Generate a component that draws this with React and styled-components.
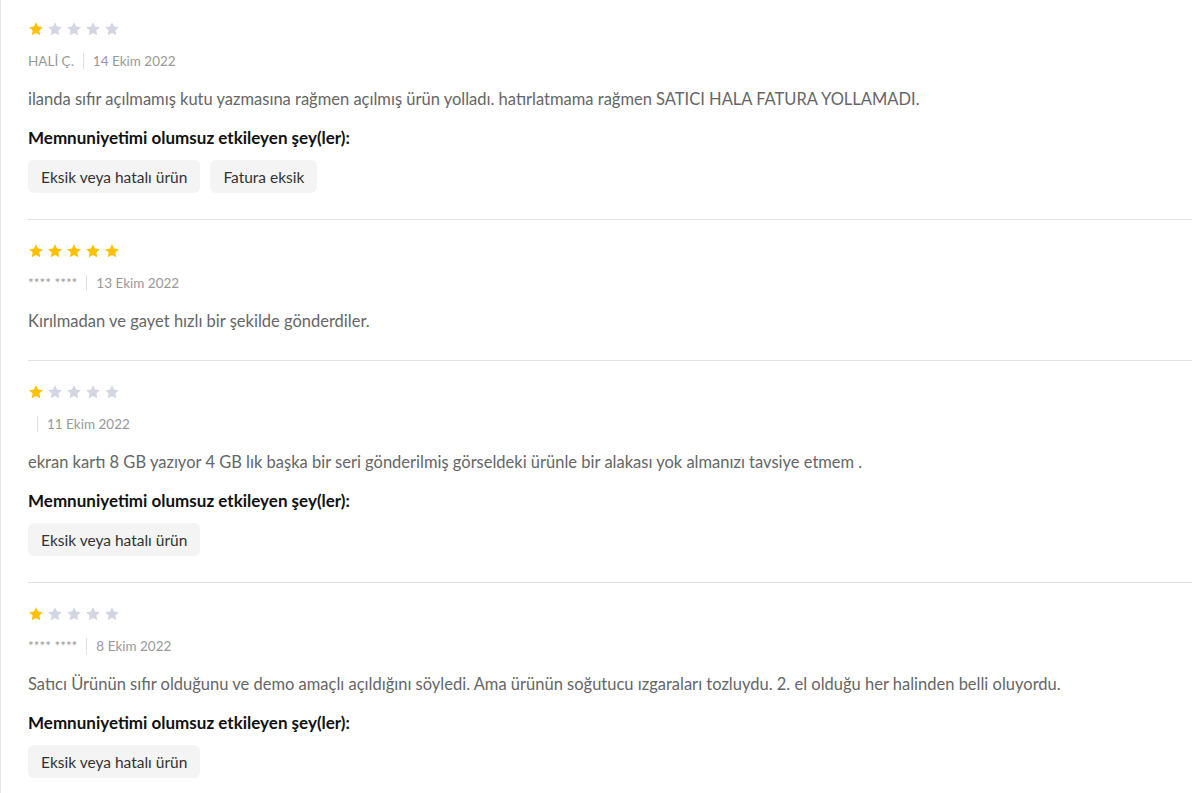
import React from "react";
import styled, { createGlobalStyle } from "styled-components";

const Global = createGlobalStyle`
  html, body { margin: 0; padding: 0; background: #fff; }
  body { font-family: "Lato", "Open Sans", sans-serif; }
`;

const Page = styled.div`
  border-left: 1px solid #e6e6e6;
  min-height: 793px;
  padding-left: 27px;
  box-sizing: border-box;
`;

const Review = styled.div`
  padding: 23px 0 26px;
  border-bottom: 1px solid #e2e2e2;
  &:first-child { padding-top: 21px; }
  &:last-child { border-bottom: none; }
`;

const Stars = styled.div`
  display: flex;
  gap: 3px;
  height: 16px;
  align-items: center;
`;

const StarSvg = styled.svg`
  width: 16px;
  height: 16px;
  display: block;
  fill: ${(p) => (p.$on ? "#ffc000" : "#d1d6e2")};
`;

const Star = ({ on }) => (
  <StarSvg $on={on} viewBox="0 0 24 24">
    <path d="M12 1.8l3.1 6.6 7.2.9-5.3 5 1.4 7.1L12 17.9l-6.4 3.5 1.4-7.1-5.3-5 7.2-.9z" />
  </StarSvg>
);

const Meta = styled.div`
  display: flex;
  align-items: center;
  margin-top: 15px;
  font-size: 13.5px;
  color: #999;
  height: 18px;
`;

const Author = styled.span`
  color: #999;
`;

const Sep = styled.span`
  width: 1px;
  height: 16px;
  background: #e1e1e1;
  margin: 0 9px;
`;

const Body = styled.p`
  margin: 19px 0 3px;
  font-size: 16.5px;
  line-height: 20px;
  color: #666;
`;

const Heading = styled.div`
  margin-top: 19px;
  font-size: 17px;
  font-weight: 700;
  line-height: 20px;
  color: #111;
`;

const Chips = styled.div`
  display: flex;
  gap: 10px;
  margin-top: 12px;
`;

const Chip = styled.span`
  display: inline-flex;
  align-items: center;
  height: 33px;
  padding: 0 13px;
  background: #f4f4f4;
  border-radius: 6px;
  font-size: 15.5px;
  color: #333;
`;

const reviews = [
  {
    rating: 1,
    author: "HALİ Ç.",
    date: "14 Ekim 2022",
    text: "ilanda sıfır açılmamış kutu yazmasına rağmen açılmış ürün yolladı. hatırlatmama rağmen SATICI HALA FATURA YOLLAMADI.",
    tags: ["Eksik veya hatalı ürün", "Fatura eksik"],
  },
  {
    rating: 5,
    author: "**** ****",
    date: "13 Ekim 2022",
    text: "Kırılmadan ve gayet hızlı bir şekilde gönderdiler.",
    tags: [],
  },
  {
    rating: 1,
    author: "",
    date: "11 Ekim 2022",
    text: "ekran kartı 8 GB yazıyor 4 GB lık başka bir seri gönderilmiş görseldeki ürünle bir alakası yok almanızı tavsiye etmem .",
    tags: ["Eksik veya hatalı ürün"],
  },
  {
    rating: 1,
    author: "**** ****",
    date: "8 Ekim 2022",
    text: "Satıcı Ürünün sıfır olduğunu ve demo amaçlı açıldığını söyledi. Ama ürünün soğutucu ızgaraları tozluydu. 2. el olduğu her halinden belli oluyordu.",
    tags: ["Eksik veya hatalı ürün"],
  },
];

export default function App() {
  return (
    <>
      <Global />
      <Page>
        {reviews.map((r, i) => (
          <Review key={i}>
            <Stars>
              {[0, 1, 2, 3, 4].map((s) => (
                <Star key={s} on={s < r.rating} />
              ))}
            </Stars>
            <Meta>
              <Author>{r.author}</Author>
              <Sep />
              <span>{r.date}</span>
            </Meta>
            <Body>{r.text}</Body>
            {r.tags.length > 0 && (
              <>
                <Heading>Memnuniyetimi olumsuz etkileyen şey(ler):</Heading>
                <Chips>
                  {r.tags.map((t) => (
                    <Chip key={t}>{t}</Chip>
                  ))}
                </Chips>
              </>
            )}
          </Review>
        ))}
      </Page>
    </>
  );
}
